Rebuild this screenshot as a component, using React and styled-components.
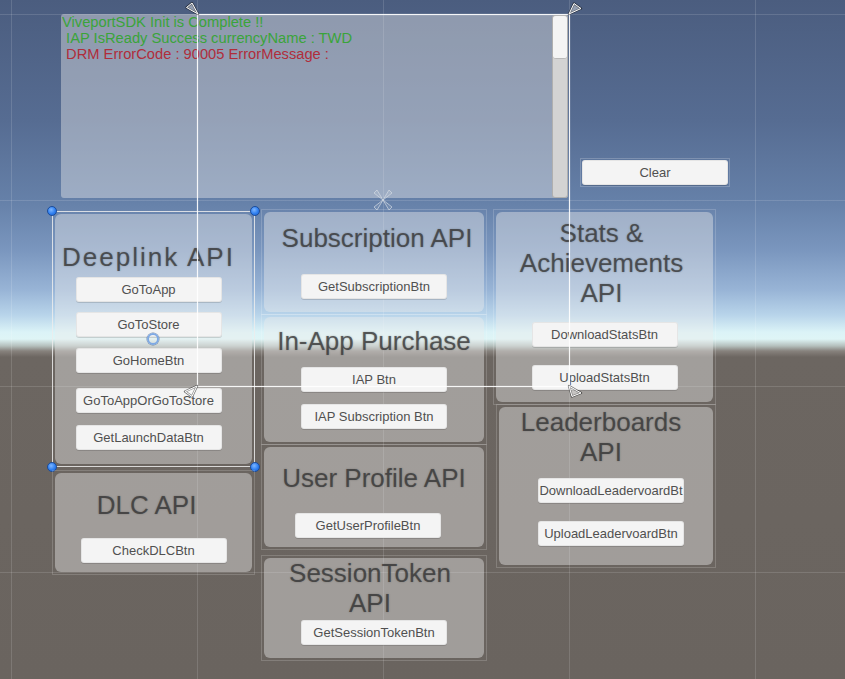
import React from "react";
import styled, { createGlobalStyle } from "styled-components";

const Global = createGlobalStyle`
  html, body { margin: 0; padding: 0; background: #6a645f; }
  body { font-family: "Liberation Sans", Arial, sans-serif; }
  * { box-sizing: border-box; }
`;

const Scene = styled.div`
  position: relative;
  width: 845px;
  height: 679px;
  overflow: hidden;
  font-family: "Liberation Sans", Arial, sans-serif;
  background-color: #6a645f;
  background-image:
    linear-gradient(to right, rgba(255, 255, 255, 0.13) 1px, transparent 1px),
    linear-gradient(to bottom, rgba(255, 255, 255, 0.13) 1px, transparent 1px),
    linear-gradient(
      to bottom,
      #4b5d7f 0px,
      #566c92 120px,
      #6580a8 200px,
      #7a96be 250px,
      #98b4d6 290px,
      #b8d4ea 315px,
      #dbf3f7 332px,
      #dff5f6 339px,
      #b4bfbc 346px,
      #87827d 351px,
      #6c6661 357px,
      #6a645f 679px
    );
  background-size: 186px 100%, 100% 186px, 100% 100%;
  background-position: 11px 0, 0 14px, 0 0;
`;

const TopRow = styled.div`
  display: flex;
  align-items: flex-start;
  height: 198px;
  padding: 14px 0 0 61px;
`;

const LogView = styled.div`
  display: flex;
  width: 507px;
  height: 184px;
  border-radius: 3px;
  background: rgba(235, 235, 235, 0.42);
`;

const LogText = styled.div`
  flex: 1;
  padding-left: 1px;
  font-size: 14.7px;
  line-height: 16px;
  white-space: pre;
  overflow: hidden;
`;

const LogLine = styled.div`
  color: ${(p) => (p.$error ? "#b02d3b" : "#3aa43a")};
`;

const ScrollBar = styled.div`
  display: flex;
  flex-direction: column;
  width: 16px;
  height: 183px;
  margin-top: 1px;
  background: #d3d3d3;
  border: 1px solid rgba(110, 110, 110, 0.35);
  border-radius: 3px;
`;

const Thumb = styled.div`
  height: 43px;
  background: #f4f4f4;
  border-radius: 3px;
  border-bottom: 1px solid #b9b9b9;
`;

const ButtonFrame = styled.div`
  margin: 144px 0 0 12px;
  padding: 1px;
  border: 1px solid rgba(255, 255, 255, 0.2);
`;

const shift = (p) =>
  p.$dx
    ? p.$dx > 0
      ? `margin-left: ${2 * p.$dx}px;`
      : `margin-right: ${-2 * p.$dx}px;`
    : "";

const Btn = styled.button`
  display: block;
  flex: none;
  width: 146px;
  height: 25px;
  padding: 0;
  margin-top: ${(p) => p.$mt || 0}px;
  ${shift}
  border: none;
  border-radius: 3px;
  background: #f4f4f4;
  box-shadow: inset 0 0 0 1px rgba(0, 0, 0, 0.06), 0 1px 0 rgba(0, 0, 0, 0.14);
  cursor: pointer;
`;

const BtnLabel = styled.span`
  display: block;
  height: 25px;
  overflow: hidden;
  font: 13px/25px "Liberation Sans", Arial, sans-serif;
  color: #505050;
  text-align: center;
  word-break: break-all;
`;

const Columns = styled.div`
  display: flex;
  align-items: flex-start;
  padding: 11px 0 0 52px;
`;

const Column = styled.div`
  display: flex;
  flex-direction: column;
  width: ${(p) => p.$w}px;
  margin-left: ${(p) => p.$ml || 0}px;
  margin-top: ${(p) => p.$mt || 0}px;
`;

const Frame = styled.div`
  position: relative;
  display: flex;
  height: ${(p) => p.$h}px;
  margin-top: ${(p) => p.$mt || 0}px;
  margin-left: ${(p) => p.$ml || 0}px;
  padding: 2px;
  border: 1px solid
    ${(p) => (p.$selected ? "rgba(236, 236, 236, 0.85)" : "rgba(255, 255, 255, 0.17)")};
`;

const Panel = styled.div`
  flex: 1;
  display: flex;
  flex-direction: column;
  align-items: center;
  padding: ${(p) => p.$pt || 0}px ${(p) => p.$pr || 0}px 0 0;
  border-radius: 6px;
  background: rgba(235, 235, 235, 0.42);
`;

const Heading = styled.div`
  font-size: 26px;
  line-height: 30px;
  text-align: center;
  white-space: pre;
  color: rgba(52, 52, 52, 0.72);
  text-shadow: 0 0 1.5px rgba(50, 50, 50, 0.45);
  letter-spacing: ${(p) => p.$ls || 0}px;
  ${shift}
`;

const Handle = styled.span`
  position: absolute;
  width: 10px;
  height: 10px;
  border-radius: 50%;
  background: radial-gradient(circle at 40% 35%, #7db6ff 0%, #2f7ff0 55%, #1c5fc8 100%);
  border: 1px solid #1a4c9c;
  ${(p) => (p.$top ? "top: -6px;" : "bottom: -6px;")}
  ${(p) => (p.$left ? "left: -6px;" : "right: -6px;")}
`;

const Pivot = styled.span`
  position: absolute;
  left: 94px;
  top: 121px;
  width: 12px;
  height: 12px;
  border-radius: 50%;
  border: 2.5px solid #7ea9e4;
  box-shadow: 0 0 0 0.5px rgba(40, 70, 120, 0.6);
`;

const Gizmos = styled.svg`
  position: absolute;
  left: 0;
  top: 0;
  width: 845px;
  height: 679px;
  pointer-events: none;
`;

const Button = ({ children, $mt, $dx }) => (
  <Btn $mt={$mt} $dx={$dx}>
    <BtnLabel>{children}</BtnLabel>
  </Btn>
);

const triangles = [
  "198,14 186.5,7.5 192,3",
  "569,14 574,3.5 581,8.5",
  "197,386 192,396.5 185,391.5",
  "569,386 572,396.5 581,393",
];

const petals = [
  "383,200 374,193 377,190",
  "383,200 389,190 392,193",
  "383,200 374,207 377,210",
  "383,200 392,207 389,210",
];

export default function App() {
  return (
    <>
      <Global />
      <Scene>
        <TopRow>
          <LogView>
            <LogText>
              <LogLine>ViveportSDK Init is Complete !!</LogLine>
              <LogLine>{" IAP IsReady Success currencyName : TWD"}</LogLine>
              <LogLine $error>{" DRM ErrorCode : 90005 ErrorMessage :"}</LogLine>
            </LogText>
            <ScrollBar>
              <Thumb />
            </ScrollBar>
          </LogView>
          <ButtonFrame>
            <Button>Clear</Button>
          </ButtonFrame>
        </TopRow>

        <Columns>
          <Column $w={203} $mt={2}>
            <Frame $h={256} $selected>
              <Panel $pt={28} $pr={10}>
                <Heading $ls={2}>Deeplink API</Heading>
                <Button $mt={5}>GoToApp</Button>
                <Button $mt={10}>GoToStore</Button>
                <Button $mt={11}>GoHomeBtn</Button>
                <Button $mt={15}>GoToAppOrGoToStore</Button>
                <Button $mt={12}>GetLaunchDataBtn</Button>
              </Panel>
              <Handle $top $left />
              <Handle $top />
              <Handle $left />
              <Handle />
              <Pivot />
            </Frame>
            <Frame $h={105} $mt={3}>
              <Panel $pt={17}>
                <Heading $dx={-7}>DLC API</Heading>
                <Button $mt={18}>CheckDLCBtn</Button>
              </Panel>
            </Frame>
          </Column>

          <Column $w={226} $ml={6}>
            <Frame $h={106}>
              <Panel $pt={11}>
                <Heading $dx={3}>Subscription API</Heading>
                <Button $mt={21}>GetSubscriptionBtn</Button>
              </Panel>
            </Frame>
            <Frame $h={131} $mt={-1}>
              <Panel $pt={9}>
                <Heading>In-App Purchase</Heading>
                <Button $mt={11}>IAP Btn</Button>
                <Button $mt={12}>IAP Subscription Btn</Button>
              </Panel>
            </Frame>
            <Frame $h={106} $mt={-1}>
              <Panel $pt={16}>
                <Heading>User Profile API</Heading>
                <Button $mt={20} $dx={-6}>GetUserProfileBtn</Button>
              </Panel>
            </Frame>
            <Frame $h={106} $mt={5}>
              <Panel $pt={0}>
                <Heading $dx={-4}>{"SessionToken\nAPI"}</Heading>
                <Button $mt={2}>GetSessionTokenBtn</Button>
              </Panel>
            </Frame>
          </Column>

          <Column $w={223} $ml={6}>
            <Frame $h={196}>
              <Panel $pt={6}>
                <Heading $dx={-3}>{"Stats &\nAchievements\nAPI"}</Heading>
                <Button $mt={14}>DownloadStatsBtn</Button>
                <Button $mt={18}>UploadStatsBtn</Button>
              </Panel>
            </Frame>
            <Frame $h={164} $mt={-1} $ml={3}>
              <Panel $pt={0}>
                <Heading $dx={-5}>{"Leaderboards\nAPI"}</Heading>
                <Button $mt={11} $dx={5}>DownloadLeadervoardBtn</Button>
                <Button $mt={18} $dx={5}>UploadLeadervoardBtn</Button>
              </Panel>
            </Frame>
          </Column>
        </Columns>

        <Gizmos viewBox="0 0 845 679">
          <rect
            x="197.5"
            y="14.5"
            width="372"
            height="372"
            fill="none"
            stroke="rgba(255,255,255,0.9)"
            strokeWidth="1.2"
          />
          {triangles.map((pts) => (
            <g key={pts}>
              <polygon points={pts} fill="rgba(255,255,255,0.2)" stroke="rgba(20,20,20,0.55)" strokeWidth="2.4" strokeLinejoin="round" />
              <polygon points={pts} fill="rgba(255,255,255,0.25)" stroke="#ffffff" strokeWidth="1" strokeLinejoin="round" />
            </g>
          ))}
          {petals.map((pts) => (
            <polygon
              key={pts}
              points={pts}
              fill="rgba(255,255,255,0.08)"
              stroke="rgba(215,220,228,0.75)"
              strokeWidth="0.9"
              strokeLinejoin="round"
            />
          ))}
        </Gizmos>
      </Scene>
    </>
  );
}
